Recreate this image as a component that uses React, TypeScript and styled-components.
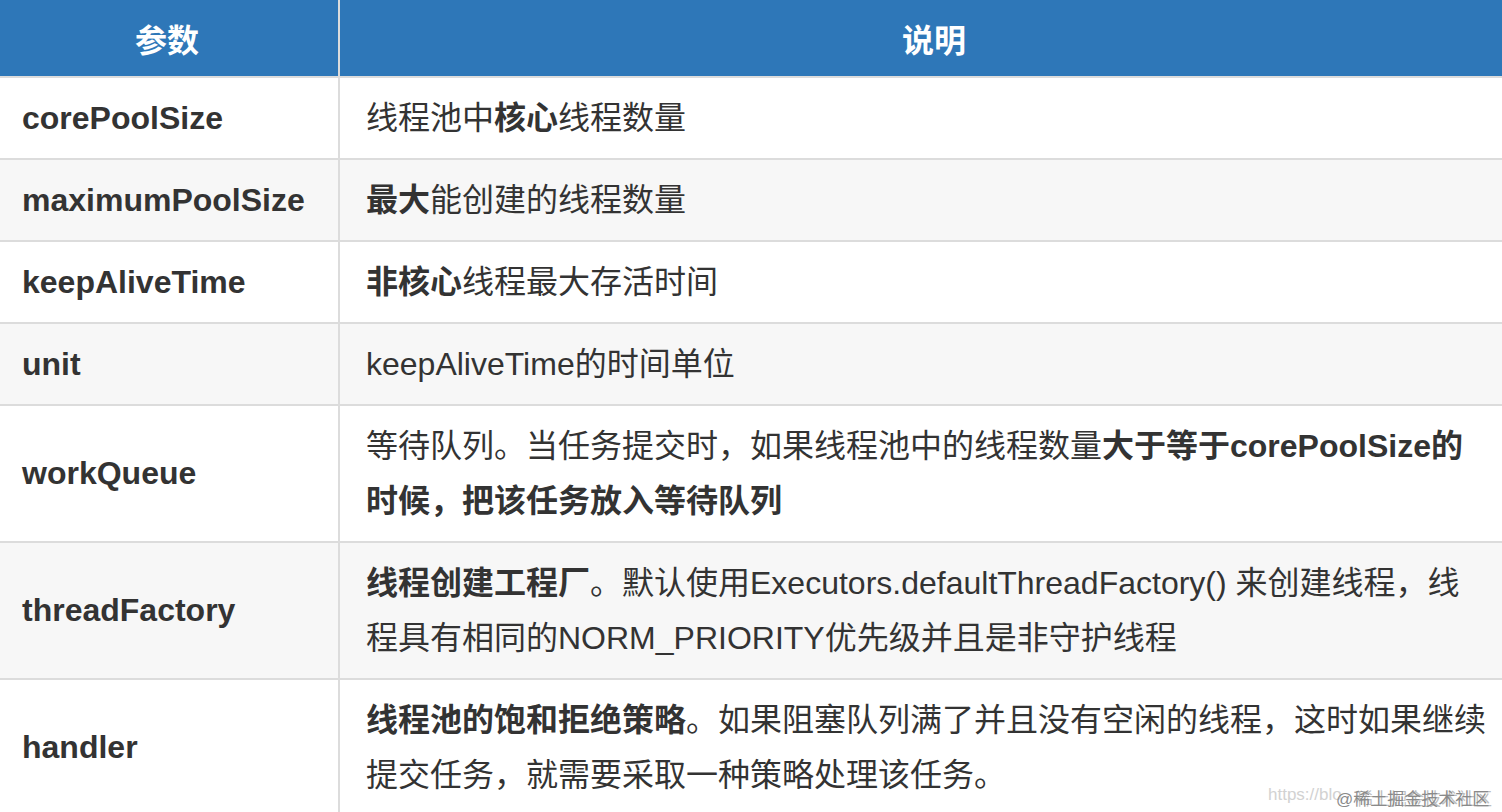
import React from "react";
import styled, { createGlobalStyle } from "styled-components";

const Global = createGlobalStyle`
  html, body {
    margin: 0;
    padding: 0;
    background: #ffffff;
    overflow: hidden;
  }
  body {
    width: 1502px;
    height: 812px;
    font-family: "Liberation Sans", "Noto Sans CJK SC", Arial, sans-serif;
    color: #333333;
  }
`;

const Page = styled.div`
  position: relative;
  width: 1502px;
  height: 812px;
  overflow: hidden;
`;

const Table = styled.div`
  width: 1532px;
  margin-left: -4px;
  display: flex;
  flex-direction: column;
`;

const HeaderRow = styled.div`
  display: grid;
  grid-template-columns: 344px 1fr;
  background: #2e77b8;
  height: 76px;
  border-bottom: 2px solid #dcdcdc;
`;

const HeaderCell = styled.div<{ $divider?: boolean }>`
  display: flex;
  align-items: center;
  justify-content: center;
  color: #ffffff;
  font-weight: 700;
  font-size: 32px;
  border-right: ${(p) => (p.$divider ? "2px solid #dcdcdc" : "none")};
`;

const Row = styled.div<{ $striped?: boolean }>`
  display: grid;
  grid-template-columns: 344px 1fr;
  background: ${(p) => (p.$striped ? "#f7f7f7" : "#ffffff")};
  border-bottom: 2px solid #dcdcdc;
`;

const NameCell = styled.div`
  display: flex;
  align-items: center;
  padding: 0 26px;
  font-size: 32px;
  font-weight: 700;
  color: #333333;
  border-right: 2px solid #dcdcdc;
`;

const DescCell = styled.div`
  padding: 13px 26px 12px 26px;
  font-size: 32px;
  line-height: 55px;
  color: #333333;
  white-space: nowrap;
`;

const B = styled.b`
  font-weight: 700;
`;

const Watermark = styled.div`
  position: absolute;
  left: 1268px;
  top: 785px;
  font-size: 17px;
  white-space: nowrap;
  font-family: "Liberation Sans", "Noto Sans CJK SC", sans-serif;
`;

const WmUrl = styled.span`
  color: #d2d2d2;
`;

const WmName = styled.span`
  position: absolute;
  left: 68px;
  top: 0;
  color: #8a8a8a;
`;

const WmGhost = styled.span`
  position: absolute;
  left: 88px;
  top: 0;
  color: #bdbdbd;
`;

type RowData = { name: string; desc: React.ReactNode };

const rows: RowData[] = [
  {
    name: "corePoolSize",
    desc: (
      <>
        线程池中<B>核心</B>线程数量
      </>
    ),
  },
  {
    name: "maximumPoolSize",
    desc: (
      <>
        <B>最大</B>能创建的线程数量
      </>
    ),
  },
  {
    name: "keepAliveTime",
    desc: (
      <>
        <B>非核心</B>线程最大存活时间
      </>
    ),
  },
  { name: "unit", desc: <>keepAliveTime的时间单位</> },
  {
    name: "workQueue",
    desc: (
      <>
        等待队列。当任务提交时，如果线程池中的线程数量
        <B>
          大于等于corePoolSize的
          <br />
          时候，把该任务放入等待队列
        </B>
      </>
    ),
  },
  {
    name: "threadFactory",
    desc: (
      <>
        <B>线程创建工程厂</B>。默认使用Executors.defaultThreadFactory()
        来创建线程，线
        <br />
        程具有相同的NORM_PRIORITY优先级并且是非守护线程
      </>
    ),
  },
  {
    name: "handler",
    desc: (
      <>
        <B>线程池的饱和拒绝策略</B>
        。如果阻塞队列满了并且没有空闲的线程，这时如果继续
        <br />
        提交任务，就需要采取一种策略处理该任务。
      </>
    ),
  },
];

export default function App() {
  return (
    <Page>
      <Global />
      <Table>
        <HeaderRow>
          <HeaderCell $divider>参数</HeaderCell>
          <HeaderCell>说明</HeaderCell>
        </HeaderRow>
        {rows.map((r, i) => (
          <Row key={r.name} $striped={i % 2 === 1}>
            <NameCell>{r.name}</NameCell>
            <DescCell>{r.desc}</DescCell>
          </Row>
        ))}
      </Table>
      <Watermark>
        <WmUrl>https://blo</WmUrl>
        <WmGhost>稀土掘金技术社区</WmGhost>
        <WmName>@稀土掘金技术社区</WmName>
      </Watermark>
    </Page>
  );
}
